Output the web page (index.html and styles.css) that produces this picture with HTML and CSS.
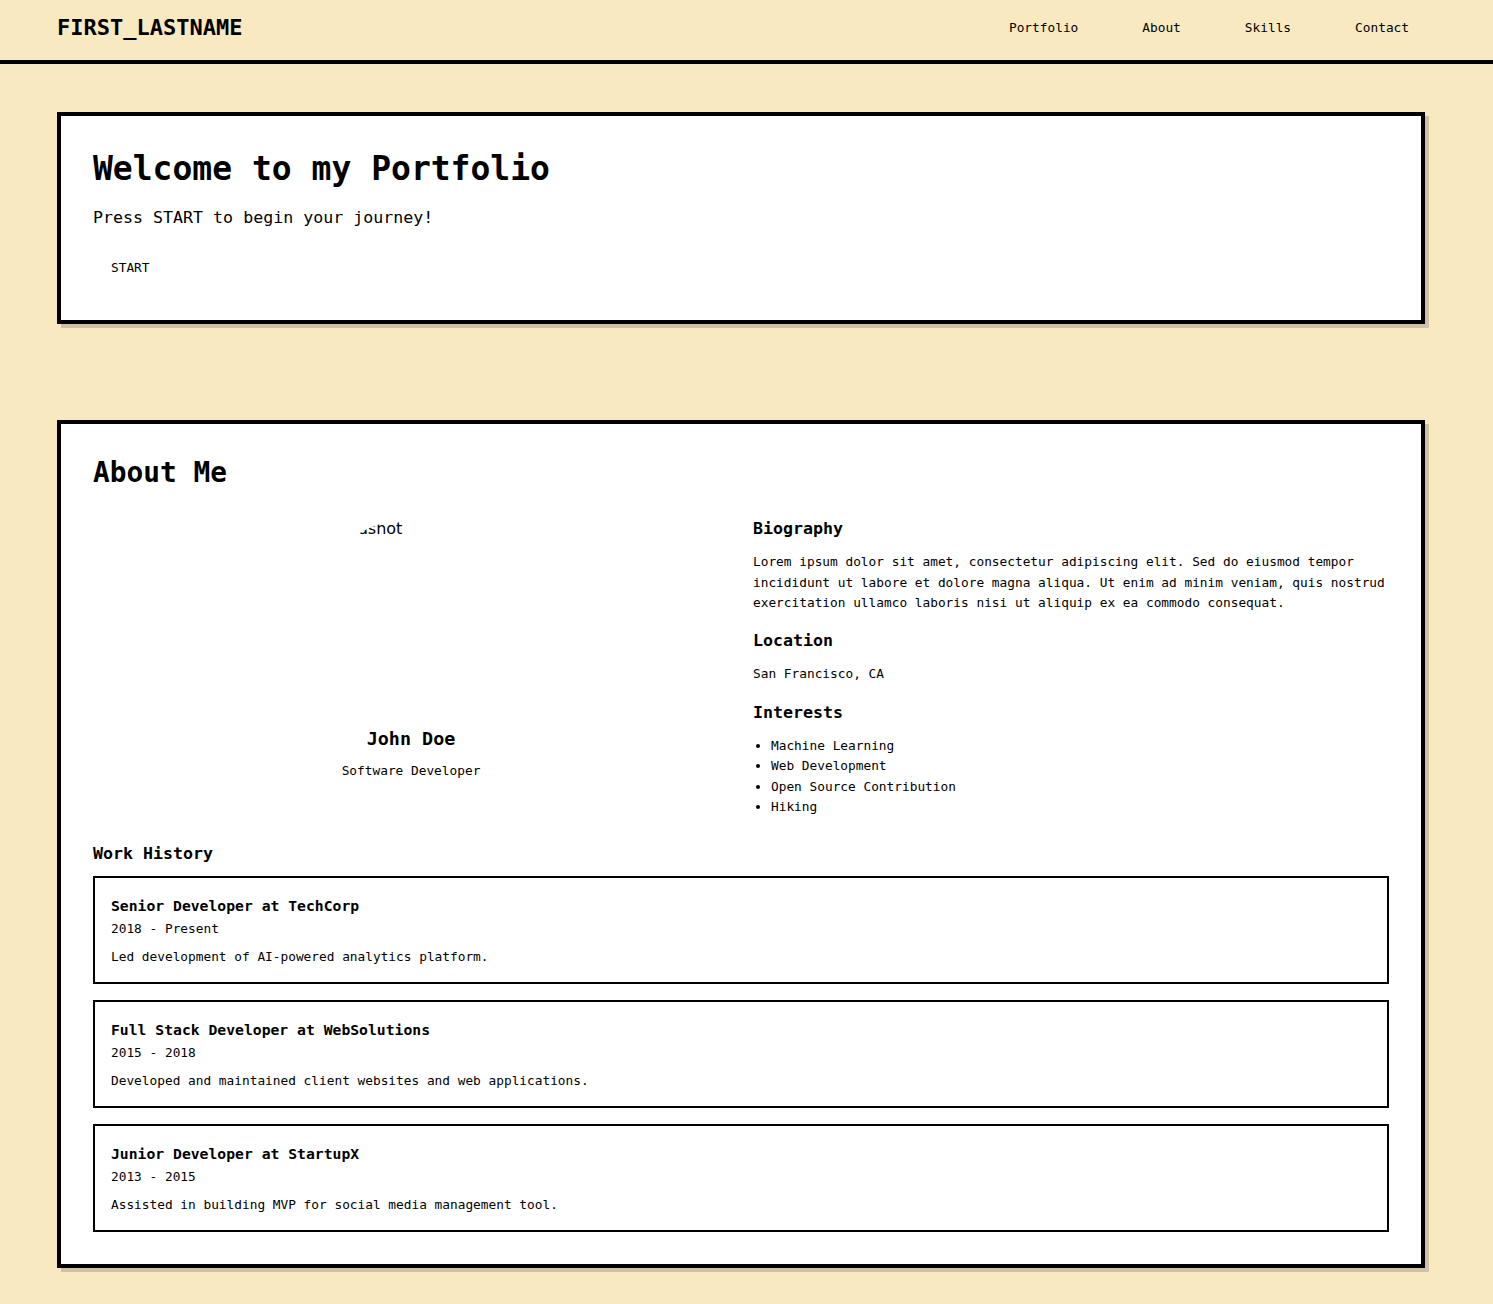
FILE: index.html
```html
<!DOCTYPE html>
<html lang="en">
<head>
<meta charset="utf-8">
<title>FIRST_LASTNAME — Portfolio</title>
<link rel="stylesheet" href="styles.css">
</head>
<body>
<header class="site-header">
  <div class="logo">FIRST_LASTNAME</div>
  <nav class="nav">
    <a class="nav-link" href="#portfolio">Portfolio</a>
    <a class="nav-link" href="#about">About</a>
    <a class="nav-link" href="#skills">Skills</a>
    <a class="nav-link" href="#contact">Contact</a>
  </nav>
</header>
<main class="main">
  <section class="card hero" id="portfolio">
    <h1 class="hero-title">Welcome to my Portfolio</h1>
    <p class="hero-text">Press START to begin your journey!</p>
    <button class="start-btn" type="button">START</button>
  </section>

  <section class="card about" id="about">
    <h2 class="section-title">About Me</h2>
    <div class="about-grid">
      <div class="profile">
        <div class="headshot"><span class="headshot-alt">Headshot</span></div>
        <div class="profile-name">John Doe</div>
        <div class="profile-role">Software Developer</div>
      </div>
      <div class="details">
        <div class="detail-block">
          <h3 class="sub-title">Biography</h3>
          <p class="detail-text">Lorem ipsum dolor sit amet, consectetur adipiscing elit. Sed do eiusmod tempor incididunt ut labore et dolore magna aliqua. Ut enim ad minim veniam, quis nostrud exercitation ullamco laboris nisi ut aliquip ex ea commodo consequat.</p>
        </div>
        <div class="detail-block">
          <h3 class="sub-title">Location</h3>
          <p class="detail-text">San Francisco, CA</p>
        </div>
        <div class="detail-block">
          <h3 class="sub-title">Interests</h3>
          <ul class="interests">
            <li>Machine Learning</li>
            <li>Web Development</li>
            <li>Open Source Contribution</li>
            <li>Hiking</li>
          </ul>
        </div>
      </div>
    </div>

    <h3 class="sub-title work-title">Work History</h3>
    <div class="jobs">
      <article class="job">
        <div class="job-title">Senior Developer at TechCorp</div>
        <div class="job-dates">2018 - Present</div>
        <p class="job-desc">Led development of AI-powered analytics platform.</p>
      </article>
      <article class="job">
        <div class="job-title">Full Stack Developer at WebSolutions</div>
        <div class="job-dates">2015 - 2018</div>
        <p class="job-desc">Developed and maintained client websites and web applications.</p>
      </article>
      <article class="job">
        <div class="job-title">Junior Developer at StartupX</div>
        <div class="job-dates">2013 - 2015</div>
        <p class="job-desc">Assisted in building MVP for social media management tool.</p>
      </article>
    </div>
  </section>
</main>
</body>
</html>
```

FILE: styles.css
```css
* {
  box-sizing: border-box;
}

html,
body {
  margin: 0;
  padding: 0;
}

body {
  background: #f9e9c0;
  color: #000;
  font-family: "DejaVu Sans Mono", monospace;
  font-size: 12.8px;
  line-height: 1.6;
}

/* Header */
.site-header {
  height: 64px;
  padding: 0 68px 4px 57px;
  border-bottom: 4px solid #000;
  display: flex;
  align-items: center;
  justify-content: space-between;
}

.logo {
  font-size: 22px;
  font-weight: bold;
  line-height: 1.2;
}

.nav {
  display: flex;
  gap: 32px;
}

.nav-link {
  padding: 8px 16px;
  color: #000;
  text-decoration: none;
  font-size: 12.8px;
  line-height: 1.6;
}

/* Main */
.main {
  padding: 48px 68px 48px 57px;
  display: flex;
  flex-direction: column;
  gap: 96px;
}

.card {
  background: #fff;
  border: 4px solid #000;
  box-shadow: 4px 4px 0 #cfc39f;
  padding: 32px;
}

/* Hero */
.hero {
  padding-top: 33px;
}

.hero-title {
  margin: 0 0 16.5px;
  font-size: 33px;
  font-weight: bold;
  line-height: 1.2;
}

.hero-text {
  margin: 0 0 15.5px;
  font-size: 16.64px;
  line-height: 1.6;
}

.start-btn {
  display: block;
  font-family: inherit;
  font-size: 12.8px;
  line-height: 1.2;
  padding: 11px 16px 10px;
  border: 2px solid #fff;
  background: #fff;
  color: #000;
  cursor: pointer;
}

/* About */
.section-title {
  margin: 0 0 28.8px;
  font-size: 27.8px;
  font-weight: bold;
  line-height: 1.25;
}

.about-grid {
  display: grid;
  grid-template-columns: 1fr 1fr;
  gap: 24px;
  align-items: start;
  margin-bottom: 26px;
}

.profile {
  display: flex;
  flex-direction: column;
  align-items: center;
  text-align: center;
}

.headshot {
  width: 200px;
  height: 200px;
  border-radius: 50%;
  overflow: hidden;
  text-align: left;
}

.headshot-alt {
  display: block;
  padding-left: 15px;
  font-family: "DejaVu Sans", sans-serif;
  font-size: 16px;
  line-height: normal;
}

.profile-name {
  margin-top: 9px;
  font-size: 18.4px;
  font-weight: bold;
  line-height: 1.2;
}

.profile-role {
  margin-top: 11px;
}

.sub-title {
  margin: 0 0 13px;
  font-size: 16.64px;
  font-weight: bold;
  line-height: 1.2;
}

.detail-block + .detail-block {
  margin-top: 18px;
}

.detail-text {
  margin: 0;
}

.interests {
  margin: 0;
  padding-left: 18px;
  list-style: disc;
}

.work-title {
  margin-bottom: 12.4px;
}

.jobs {
  display: flex;
  flex-direction: column;
  gap: 16px;
}

.job {
  border: 2px solid #000;
  padding: 16px 16px 14.5px;
}

.job-title {
  font-size: 14.72px;
  font-weight: bold;
  line-height: 1.6;
}

.job-dates {
  margin-top: 1.5px;
  line-height: 1.6;
}

.job-desc {
  margin: 7.5px 0 0;
}
```
